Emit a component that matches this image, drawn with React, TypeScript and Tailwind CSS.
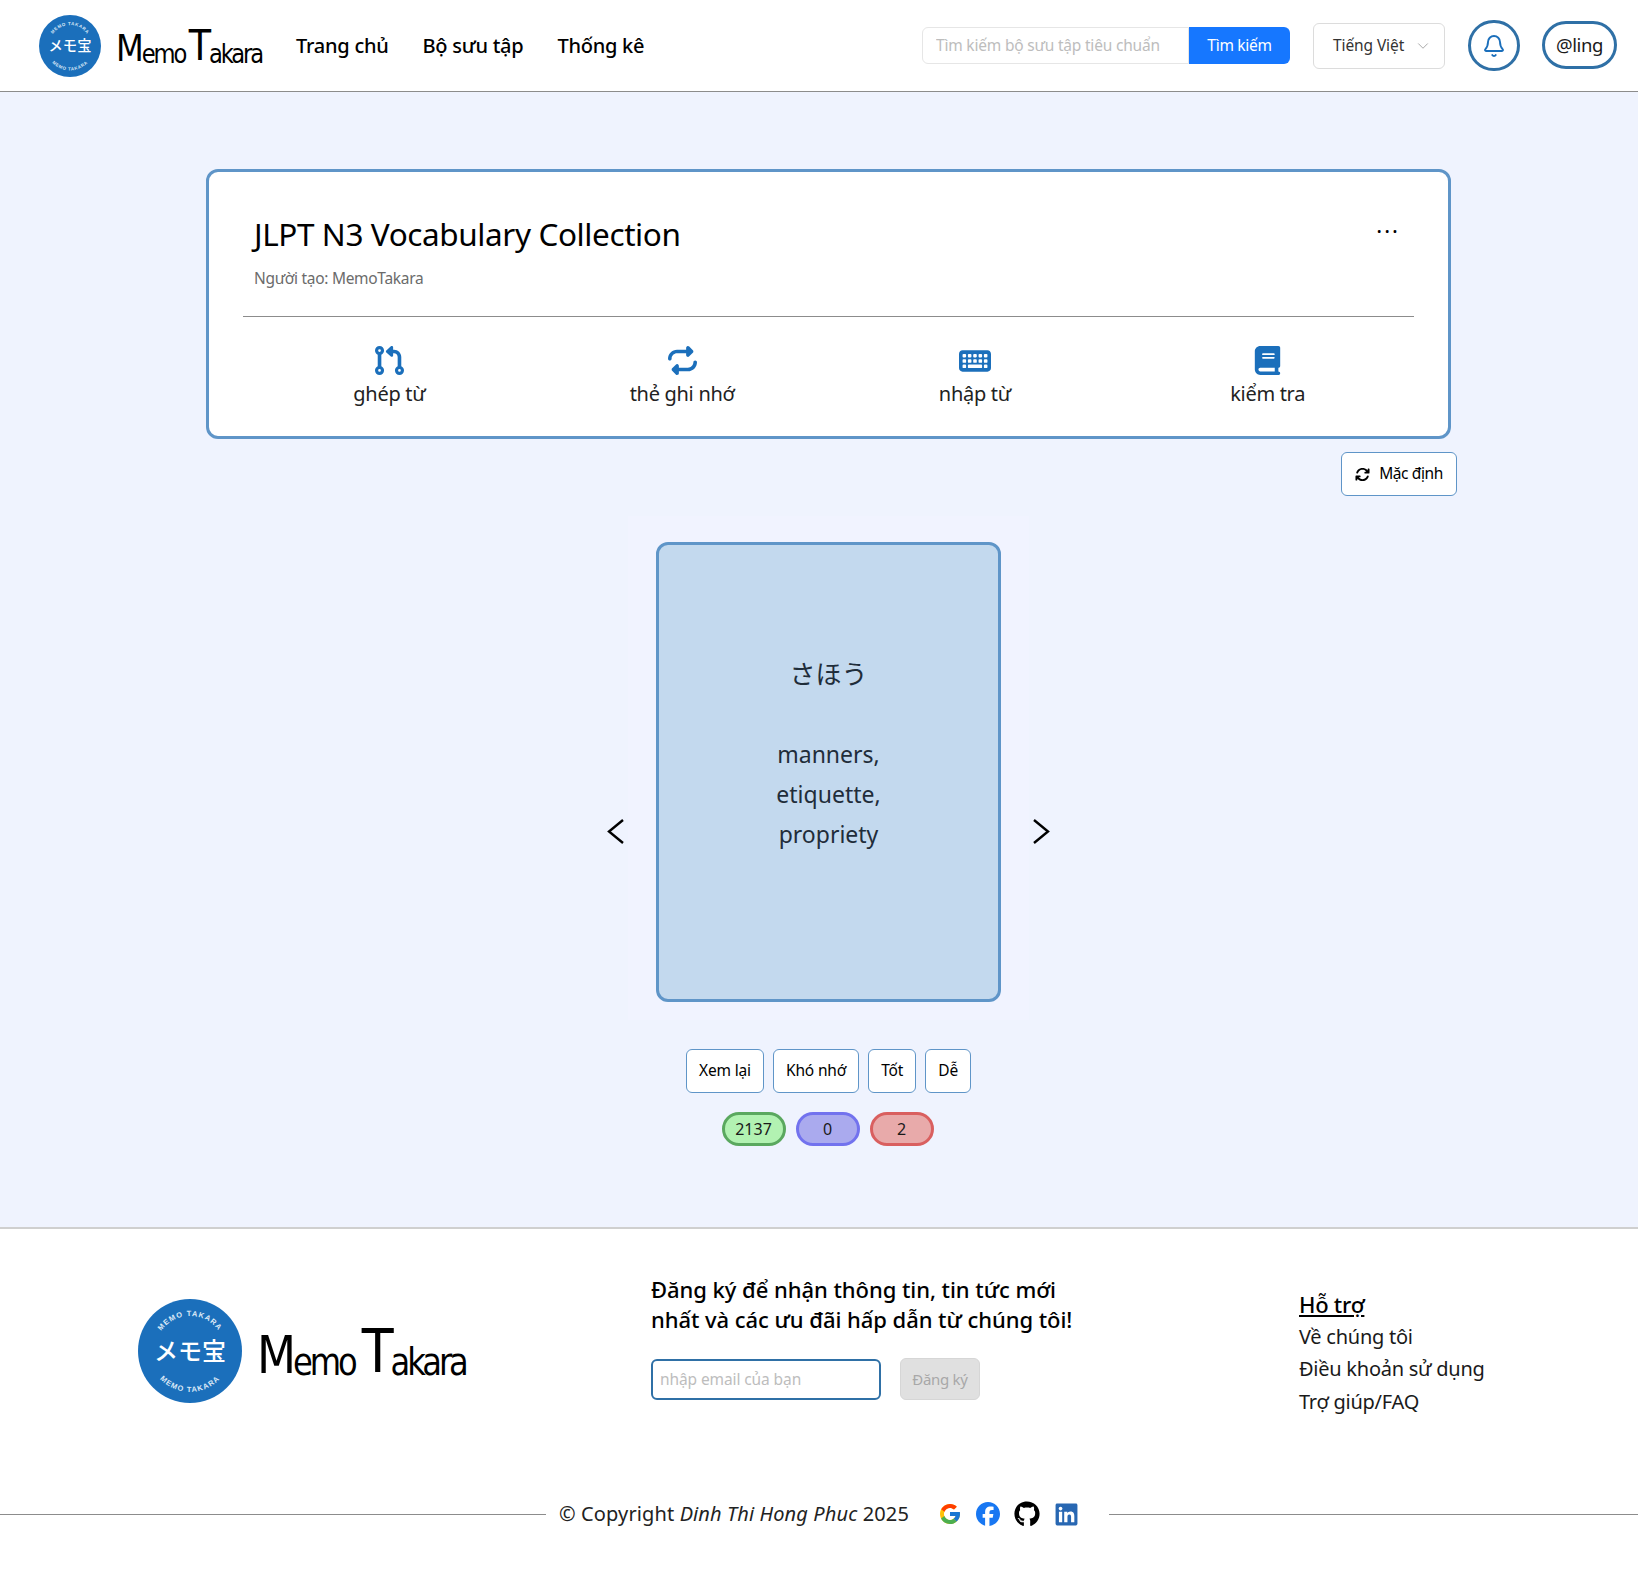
import { Bell, ChevronDown } from "lucide-react";
import { FaArrowsRotate, FaBook, FaCodePullRequest, FaFacebook, FaGithub, FaKeyboard, FaLinkedin, FaRepeat } from "react-icons/fa6";
import { FcGoogle } from "react-icons/fc";

const actions = [
    { label: "ghép từ", icon: FaCodePullRequest, size: 29 },
    { label: "thẻ ghi nhớ", icon: FaRepeat, size: 29 },
    { label: "nhập từ", icon: FaKeyboard, size: 32 },
    { label: "kiểm tra", icon: FaBook, size: 29 },
];

function LogoMark({ size }: { size: number }) {
    return (
        <svg width={size} height={size} viewBox="0 0 104 104" className="shrink-0">
            <circle cx="52" cy="52" r="52" fill="#1b6fbb" />
            <defs>
                <path id={`top-${size}`} d="M 17 52 A 35 35 0 0 1 87 52" />
                <path id={`bottom-${size}`} d="M 11 52 A 41 41 0 0 0 93 52" />
            </defs>
            <text fontSize="7.5" fontWeight="700" fill="#dbe9f7" letterSpacing="1" fontFamily="'Liberation Sans', sans-serif" textAnchor="middle">
                <textPath href={`#top-${size}`} startOffset="50%">MEMO TAKARA</textPath>
            </text>
            <text fontSize="7.5" fontWeight="700" fill="#dbe9f7" letterSpacing="1" fontFamily="'Liberation Sans', sans-serif" textAnchor="middle">
                <textPath href={`#bottom-${size}`} startOffset="50%">MEMO TAKARA</textPath>
            </text>
            <text x="52" y="61" fontSize="24" fontWeight="500" fill="#ffffff" textAnchor="middle" fontFamily="'Noto Sans CJK JP', sans-serif">メモ宝</text>
        </svg>
    );
}

function Wordmark({ big }: { big?: boolean }) {
    return (
        <span className={`font-['DejaVu_Sans',sans-serif] font-normal text-black whitespace-nowrap leading-none flex items-end scale-x-[0.87] origin-left ${big ? "text-[37px] tracking-[-3.5px]" : "text-[26px] tracking-[-2.4px]"}`}>
            <span className={big ? "text-[52px]" : "text-[37px]"}>M</span>emo<span className={`${big ? "text-[60px] ml-2" : "text-[42px] ml-1"}`}>T</span>akara
        </span>
    );
}

function Arrow({ right }: { right?: boolean }) {
    return (
        <svg width="17" height="25" viewBox="0 0 17 25" fill="none" stroke="#000" strokeWidth="2.4" className="shrink-0 mt-[303px]">
            <path d={right ? "M1 1 L15 12.5 L1 24" : "M16 1 L2 12.5 L16 24"} />
        </svg>
    );
}

export default function App() {
    return (
        <div className="w-[1638px] min-h-[1574px] bg-white font-['Noto_Sans','Noto_Sans_CJK_JP',sans-serif] text-[#1a1a1a]">
            <header className="h-[92px] flex items-center bg-white border-b border-[#8c8c8c] pl-[39px] pr-[21px]">
                <LogoMark size={62} />
                <div className="ml-[15px] w-[180px] shrink-0"><Wordmark /></div>
                <nav className="flex gap-[34px] text-[20px] font-medium text-black tracking-[-0.25px]">
                    <a>Trang chủ</a>
                    <a>Bộ sưu tập</a>
                    <a>Thống kê</a>
                </nav>
                <div className="ml-auto flex items-center">
                    <div className="flex h-[37px] w-[368px] mr-[23px]">
                        <input placeholder="Tìm kiếm bộ sưu tập tiêu chuẩn" className="w-[267px] px-[13px] bg-white border border-[#e6e6e6] rounded-l-md text-[15.5px] tracking-[-0.2px] placeholder:text-[#bdbdbd] outline-none" />
                        <button className="flex-1 bg-[#1677ff] text-white text-[15.5px] rounded-r-md tracking-[-0.3px]">Tìm kiếm</button>
                    </div>
                    <div className="flex items-center justify-between w-[132px] h-[46px] pl-[19px] pr-[12px] mr-[23px] bg-white border border-[#dcdcdc] rounded-md text-[15.5px] text-[#333] tracking-[-0.1px]">
                        Tiếng Việt
                        <ChevronDown size={18} strokeWidth={1} className="text-[#8c8c8c]" />
                    </div>
                    <button className="flex items-center justify-center w-[52px] h-[51px] mr-[22px] bg-white border-[3px] border-[#2f70a6] rounded-full">
                        <Bell size={24} strokeWidth={1.9} className="text-[#1b6fbb]" />
                    </button>
                    <button className="w-[75px] h-[48px] -mt-[1px] bg-white border-[3px] border-[#2f70a6] rounded-full text-[18.5px] tracking-[-0.4px]">@ling</button>
                </div>
            </header>

            <main className="h-[1135px] bg-[#eff3fe] pt-[77px] pl-[206px]">
                <div className="w-[1245px] h-[270px] bg-white border-[3px] border-[#5f95c8] rounded-[12px] px-[34px] relative">
                    <h1 className="pl-[11px] pt-[40px] text-[31.5px] leading-[44px] text-black tracking-[-0.4px]">JLPT N3 Vocabulary Collection</h1>
                    <p className="pl-[11px] mt-[11px] text-[15.5px] text-[#6b6b6b] tracking-[-0.3px]">Người tạo: MemoTakara</p>
                    <button className="absolute right-[48px] top-[41px] text-[22px] leading-none tracking-[2px] text-black">...</button>
                    <div className="mt-[26px] border-t border-[#8c8c8c] grid grid-cols-4 pt-[29px]">
                        {actions.map((item) => (
                            <div key={item.label} className="flex flex-col items-center">
                                <div className="h-[29px] flex items-center">
                                    <item.icon size={item.size} className="text-[#1b6fbb]" />
                                </div>
                                <span className="mt-[5px] text-[20px] leading-[28px] tracking-[-0.3px] text-[#222]">{item.label}</span>
                            </div>
                        ))}
                    </div>
                </div>

                <div className="w-[1251px] flex justify-end mt-[13px]">
                    <button className="flex items-center gap-[9px] w-[116px] h-[44px] justify-center bg-white border border-[#5f95c8] rounded-md text-[15.5px] tracking-[-0.4px] text-black">
                        <FaArrowsRotate size={15} />
                        Mặc định
                    </button>
                </div>

                <div className="w-[1245px] flex justify-center items-start mt-[20px] gap-[4px]">
                    <Arrow />
                    <div className="w-[401px] h-[504px] bg-[#f1f3ff] pt-[26px] flex justify-center">
                        <div className="w-[345px] h-[460px] bg-[#c3d9ee] border-[3px] border-[#5f95c8] rounded-[12px] flex flex-col items-center text-[23px] leading-[40px] text-[#1f2d3a] text-center pt-[108px]">
                            <p className="font-['Noto_Sans_CJK_JP',sans-serif] text-[26px]">さほう</p>
                            <p className="mt-[41px] w-[170px]">manners, etiquette, propriety</p>
                        </div>
                    </div>
                    <Arrow right />
                </div>

                <div className="w-[1245px] flex justify-center gap-[9px] mt-[29px]">
                    {["Xem lại", "Khó nhớ", "Tốt", "Dễ"].map((label) => (
                        <button key={label} className="h-[44px] px-[12px] bg-white border border-[#5f95c8] rounded-md text-[15.5px] tracking-[-0.15px] text-black">{label}</button>
                    ))}
                </div>

                <div className="w-[1245px] flex justify-center gap-[10px] mt-[19px] pr-[2px]">
                    <span className="w-[64px] h-[34px] flex items-center justify-center rounded-full bg-[#b2f2b2] border-[3px] border-[#5aa85f] text-[16px]">2137</span>
                    <span className="w-[64px] h-[34px] flex items-center justify-center rounded-full bg-[#aaaaee] border-[3px] border-[#7272ee] text-[16px]">0</span>
                    <span className="w-[64px] h-[34px] flex items-center justify-center rounded-full bg-[#e8aaaa] border-[3px] border-[#d95f5f] text-[16px]">2</span>
                </div>
            </main>

            <footer className="h-[347px] bg-white border-t-2 border-[#cfcfcf]">
                <div className="flex items-start pl-[138px] h-[270px]">
                    <div className="w-[513px] pt-[70px] flex items-center gap-[15px]">
                        <LogoMark size={104} />
                        <Wordmark big />
                    </div>
                    <div className="w-[648px] pt-[45px]">
                        <h3 className="text-[22px] leading-[30px] font-medium text-black tracking-[-0.05px]">Đăng ký để nhận thông tin, tin tức mới<br />nhất và các ưu đãi hấp dẫn từ chúng tôi!</h3>
                        <div className="flex items-center gap-[19px] mt-[24px]">
                            <input placeholder="nhập email của bạn" className="w-[230px] h-[41px] px-[7px] bg-white border-2 border-[#2f70a6] rounded-md text-[15.5px] tracking-[-0.1px] placeholder:text-[#bdbdbd] outline-none" />
                            <button className="w-[80px] h-[42px] bg-[#e0e0e0] border border-[#d6d6d6] rounded-md text-[15px] tracking-[-0.3px] text-[#a8a8a8]">Đăng ký</button>
                        </div>
                    </div>
                    <div className="pt-[59px] text-[20px] leading-[32.5px] tracking-[-0.25px] text-[#1a1a1a]">
                        <h4 className="text-[22px] font-medium underline text-black">Hỗ trợ</h4>
                        <p>Về chúng tôi</p>
                        <p>Điều khoản sử dụng</p>
                        <p>Trợ giúp/FAQ</p>
                    </div>
                </div>
                <div className="flex items-center">
                    <div className="w-[546px] border-t border-[#8c8c8c]" />
                    <p className="ml-[13px] text-[20px] tracking-[0.12px] text-[#222] whitespace-nowrap">© Copyright <em>Dinh Thi Hong Phuc</em> 2025</p>
                    <div className="flex items-center gap-[14px] ml-[29px]">
                        <FcGoogle size={24} />
                        <FaFacebook size={24} className="text-[#1877f2]" />
                        <FaGithub size={26} className="text-black" />
                        <FaLinkedin size={25} className="text-[#2867b2]" />
                    </div>
                    <div className="flex-1 ml-[30px] border-t border-[#8c8c8c]" />
                </div>
            </footer>
        </div>
    );
}
